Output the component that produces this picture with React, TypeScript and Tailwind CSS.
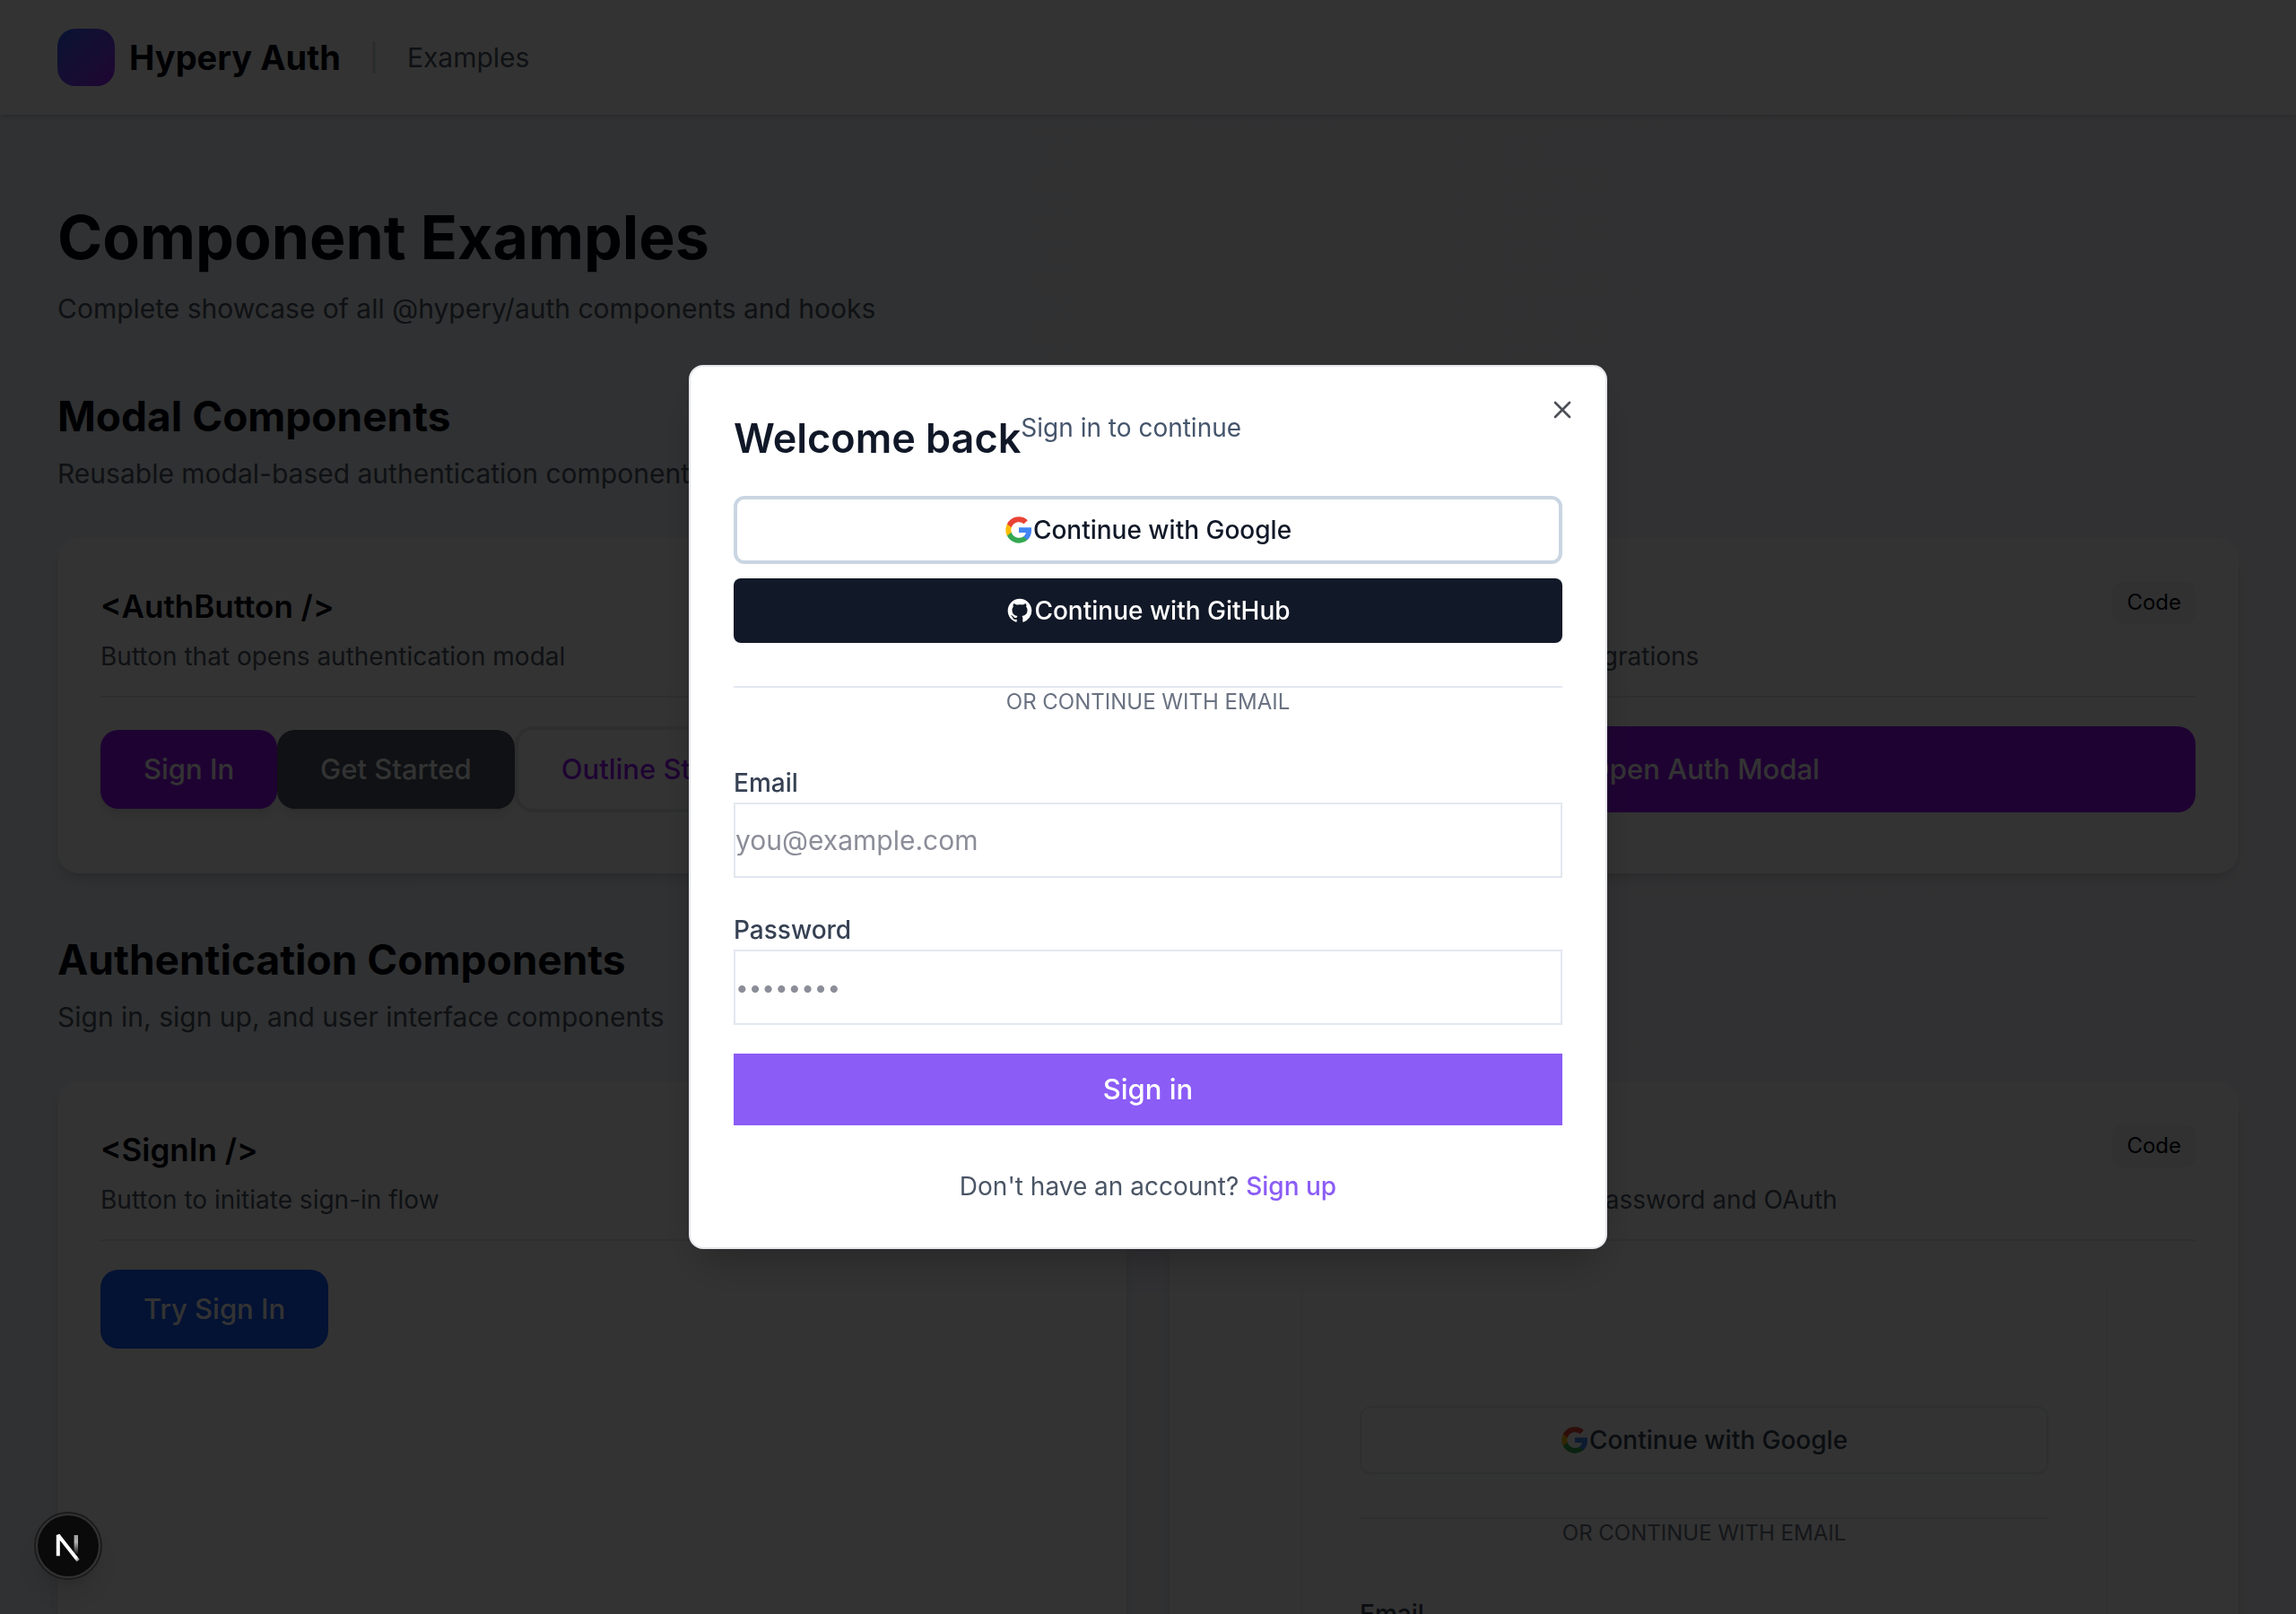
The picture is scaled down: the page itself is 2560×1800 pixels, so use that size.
import React, { useState } from "react";
import { X } from "lucide-react";

type CardProps = {
	title: string;
	description: string;
	children: React.ReactNode;
};

const GoogleIcon = () => (
	<svg viewBox="0 0 24 24" className="size-8 shrink-0" aria-hidden="true">
		<path
			fill="#4285F4"
			d="M22.56 12.25c0-.78-.07-1.53-.2-2.25H12v4.26h5.92c-.26 1.37-1.04 2.53-2.21 3.31v2.77h3.57c2.08-1.92 3.28-4.74 3.28-8.09z"
		/>
		<path
			fill="#34A853"
			d="M12 23c2.97 0 5.46-.98 7.28-2.66l-3.57-2.77c-.98.66-2.23 1.06-3.71 1.06-2.86 0-5.29-1.93-6.16-4.53H2.18v2.84C3.99 20.53 7.7 23 12 23z"
		/>
		<path
			fill="#FBBC05"
			d="M5.84 14.09c-.22-.66-.35-1.36-.35-2.09s.13-1.43.35-2.09V7.07H2.18C1.43 8.55 1 10.22 1 12s.43 3.45 1.18 4.93l2.85-2.22.81-.62z"
		/>
		<path
			fill="#EA4335"
			d="M12 5.38c1.62 0 3.06.56 4.21 1.64l3.15-3.15C17.45 2.09 14.97 1 12 1 7.7 1 3.99 3.47 2.18 7.07l3.66 2.84c.87-2.6 3.3-4.53 6.16-4.53z"
		/>
	</svg>
);

const GitHubIcon = () => (
	<svg viewBox="0 0 24 24" className="size-8 shrink-0" fill="currentColor" aria-hidden="true">
		<path
			fillRule="evenodd"
			clipRule="evenodd"
			d="M12 2C6.477 2 2 6.484 2 12.017c0 4.425 2.865 8.18 6.839 9.504.5.092.682-.217.682-.483 0-.237-.008-.868-.013-1.703-2.782.605-3.369-1.343-3.369-1.343-.454-1.158-1.11-1.466-1.11-1.466-.908-.62.069-.608.069-.608 1.003.07 1.531 1.032 1.531 1.032.892 1.53 2.341 1.088 2.91.832.092-.647.35-1.088.636-1.338-2.22-.253-4.555-1.113-4.555-4.951 0-1.093.39-1.988 1.029-2.688-.103-.253-.446-1.272.098-2.65 0 0 .84-.27 2.75 1.026A9.564 9.564 0 0112 6.844c.85.004 1.705.115 2.504.337 1.909-1.296 2.747-1.027 2.747-1.027.546 1.379.202 2.398.1 2.651.64.7 1.028 1.595 1.028 2.688 0 3.848-2.339 4.695-4.566 4.943.359.309.678.92.678 1.855 0 1.338-.012 2.419-.012 2.747 0 .268.18.58.688.482A10.019 10.019 0 0022 12.017C22 6.484 17.522 2 12 2z"
		/>
	</svg>
);

const Card = ({ title, description, children }: CardProps) => (
	<article className="rounded-3xl bg-white px-12 pt-12 pb-[68px] shadow-lg">
		<div className="mb-8 flex items-start justify-between border-b-2 border-gray-200 pb-6">
			<div>
				<h3 className="text-[35px] leading-[56px] font-semibold text-gray-950">{title}</h3>
				<p className="mt-2 text-[28px] leading-10 text-gray-600">{description}</p>
			</div>
			<button
				type="button"
				className="rounded-xl bg-gray-100 px-4 py-2 text-[24px] leading-8 text-gray-950">
				Code
			</button>
		</div>
		{children}
	</article>
);

const Section = ({ title, description, children }: CardProps) => (
	<section className="mt-16">
		<h2 className="text-[46px] leading-[64px] font-bold text-gray-950">{title}</h2>
		<p className="mt-2 text-[30px] leading-[48px] text-gray-600">{description}</p>
		<div className="mt-12 grid grid-cols-2 gap-12">{children}</div>
	</section>
);

const EmailDivider = () => (
	<div className="mt-12 border-t-2 border-slate-200 text-center text-[24px] leading-8 text-gray-500 uppercase">
		Or continue with email
	</div>
);

const FieldLabel = ({ htmlFor, children }: { htmlFor: string; children: React.ReactNode }) => (
	<label
		htmlFor={htmlFor}
		className="block pt-1 text-[28px] leading-[44px] font-medium text-gray-700">
		{children}
	</label>
);

const SignInFormPreview = () => (
	<form
		onSubmit={(e) => e.preventDefault()}
		className="mx-auto max-w-4xl rounded-3xl bg-white px-16 pt-[152px] pb-16 shadow-md">
		<button
			type="button"
			className="flex h-[76px] w-full items-center justify-center rounded-xl border-2 border-slate-200 text-[28px] font-medium text-gray-700">
			<GoogleIcon />
			Continue with Google
		</button>
		<EmailDivider />
		<div className="mt-12">
			<FieldLabel htmlFor="preview-email">Email</FieldLabel>
			<input
				id="preview-email"
				type="email"
				className="block h-[84px] w-full border-2 border-slate-200"
			/>
		</div>
	</form>
);

const AuthModal = ({ onClose }: { onClose: () => void }) => {
	const [email, setEmail] = useState("");
	const [password, setPassword] = useState("");

	return (
		<div className="fixed inset-0 flex items-center justify-center bg-black/80">
			<div
				role="dialog"
				aria-modal="true"
				aria-labelledby="auth-title"
				className="relative w-full max-w-5xl rounded-2xl border-2 border-gray-200 bg-white p-12 shadow-2xl">
				<button
					type="button"
					aria-label="Close"
					onClick={onClose}
					className="absolute top-8 right-8 text-gray-950 opacity-70">
					<X className="size-8" />
				</button>
				<div className="flex items-start">
					<h2 id="auth-title" className="text-[45px] leading-[64px] font-semibold text-gray-900">
						Welcome back
					</h2>
					<p className="text-[28px] leading-10 text-slate-600">Sign in to continue</p>
				</div>
				<div className="mt-8 flex flex-col gap-4">
					<button
						type="button"
						className="flex h-[76px] items-center justify-center rounded-xl border-4 border-slate-300 text-[28px] font-medium text-gray-900">
						<GoogleIcon />
						Continue with Google
					</button>
					<button
						type="button"
						className="flex h-[72px] items-center justify-center rounded-lg bg-[#111827] text-[28px] font-medium text-white">
						<GitHubIcon />
						Continue with GitHub
					</button>
				</div>
				<EmailDivider />
				<form onSubmit={(e) => e.preventDefault()} className="mt-12 flex flex-col gap-8">
					<div>
						<FieldLabel htmlFor="email">Email</FieldLabel>
						<input
							id="email"
							type="email"
							value={email}
							onChange={(e) => setEmail(e.target.value)}
							placeholder="you@example.com"
							className="block h-[84px] w-full border-2 border-slate-200 text-[30px] placeholder:text-[#8b8d98]"
						/>
					</div>
					<div>
						<FieldLabel htmlFor="password">Password</FieldLabel>
						<input
							id="password"
							type="password"
							value={password}
							onChange={(e) => setPassword(e.target.value)}
							placeholder="••••••••"
							className="block h-[84px] w-full border-2 border-slate-200 text-[26px] placeholder:text-[#8b8d98]"
						/>
					</div>
					<button type="submit" className="h-20 bg-[#8b5cf6] text-[31px] font-medium text-white">
						Sign in
					</button>
				</form>
				<p className="mt-12 text-center text-[28px] leading-10 text-gray-600">
					Don't have an account?{" "}
					<a href="#signup" className="font-medium text-[#8b5cf6]">
						Sign up
					</a>
				</p>
			</div>
		</div>
	);
};

const DevBadge = () => (
	<button
		type="button"
		aria-label="Open dev tools"
		className="fixed bottom-[38px] left-[38px] size-[76px] rounded-full border-2 border-[#1c1c1c] bg-[#333333] p-[2px] shadow-xl">
		<svg viewBox="1 1 34 34" className="size-full">
			<defs>
				<linearGradient id="nDiagonal" x1="9.95" y1="11.1" x2="14.4" y2="16.8" gradientUnits="userSpaceOnUse">
					<stop stopColor="white" />
					<stop offset="0.5" stopColor="white" />
					<stop offset="1" stopColor="white" stopOpacity="0" />
				</linearGradient>
				<linearGradient id="nStem" x1="12.4" y1="1" x2="12.4" y2="12" gradientUnits="userSpaceOnUse">
					<stop stopColor="white" stopOpacity="0.6" />
					<stop offset="0.35" stopColor="white" stopOpacity="0.7" />
					<stop offset="1" stopColor="white" stopOpacity="0" />
				</linearGradient>
			</defs>
			<circle cx="18" cy="18" r="17" fill="#0a0a0a" />
			<g transform="translate(10 11)">
				<path
					d="M13.6 15.2 L2.4 1 V12.6"
					fill="none"
					stroke="url(#nDiagonal)"
					strokeWidth="2"
					strokeLinejoin="bevel"
				/>
				<path d="M12.4 1 V12" fill="none" stroke="url(#nStem)" strokeWidth="2.2" />
			</g>
		</svg>
	</button>
);

export default function App() {
	const [open, setOpen] = useState(true);

	return (
		<div className="h-screen overflow-hidden bg-linear-to-r from-[#eef3fa] to-[#f6f5fc] font-[Inter,sans-serif]">
			<header className="flex items-center gap-8 bg-white px-16 py-8 shadow-md">
				<a href="#home" className="flex items-center gap-4">
					<span className="size-16 rounded-[20px] bg-linear-to-br from-blue-600 to-purple-600" />
					<span className="text-[38px] leading-[56px] font-bold text-gray-950">Hypery Auth</span>
				</a>
				<span className="text-[30px] leading-[48px] text-gray-300">|</span>
				<span className="text-[30px] leading-[48px] text-gray-600">Examples</span>
			</header>

			<main className="px-16 py-24">
				<h1 className="text-[68px] leading-[80px] font-bold text-gray-950">Component Examples</h1>
				<p className="mt-4 text-[30px] leading-[48px] text-gray-600">
					Complete showcase of all @hypery/auth components and hooks
				</p>

				<Section
					title="Modal Components"
					description="Reusable modal-based authentication components">
					<Card title="<AuthButton />" description="Button that opens authentication modal">
						<div className="flex items-center text-[31px] leading-10 font-medium">
							<button
								type="button"
								onClick={() => setOpen(true)}
								className="rounded-[20px] bg-purple-600 px-12 py-6 text-white shadow-lg">
								Sign In
							</button>
							<button
								type="button"
								onClick={() => setOpen(true)}
								className="rounded-[20px] bg-gray-600 px-12 py-6 text-white shadow-lg">
								Get Started
							</button>
							<button
								type="button"
								onClick={() => setOpen(true)}
								className="rounded-[20px] border-4 border-gray-200 px-12 py-6 text-purple-600">
								Outline Style
							</button>
						</div>
					</Card>
					<Card title="<AuthModal />" description="Modal component for simple integrations">
						<button
							type="button"
							onClick={() => setOpen(true)}
							className="h-24 w-full rounded-[20px] bg-purple-600 text-[31px] font-medium text-white">
							Open Auth Modal
						</button>
					</Card>
				</Section>

				<Section
					title="Authentication Components"
					description="Sign in, sign up, and user interface components">
					<Card title="<SignIn />" description="Button to initiate sign-in flow">
						<button
							type="button"
							className="rounded-[20px] bg-blue-600 px-12 py-6 text-[31px] leading-10 font-medium text-white">
							Try Sign In
						</button>
					</Card>
					<Card
						title="<SignInForm />"
						description="Complete login form with email/password and OAuth">
						<SignInFormPreview />
					</Card>
				</Section>
			</main>

			{open && <AuthModal onClose={() => setOpen(false)} />}
			<DevBadge />
		</div>
	);
}
